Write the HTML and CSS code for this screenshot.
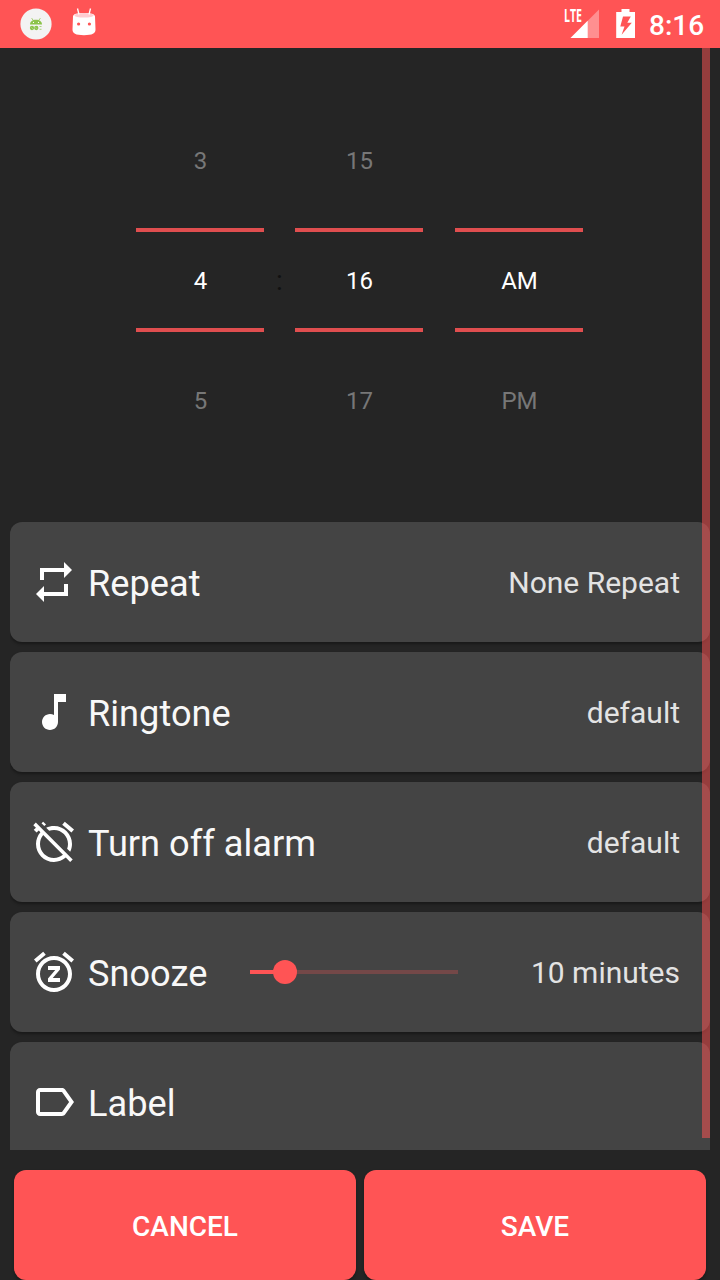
FILE: index.html
```
<!DOCTYPE html>
<html lang="en">
<head>
<meta charset="utf-8">
<title>Alarm</title>
<link rel="stylesheet" href="styles.css">
</head>
<body>
<header class="status">
  <svg class="status-left" width="120" height="48" viewBox="0 0 120 48">
    <circle cx="36" cy="24" r="15.6" fill="#f3f3f3"/>
    <path d="M30 24.600c0-3 2.500-4.900 6-4.900s6 1.900 6 4.900z" fill="#8bc34a"/>
    <path d="M31.700 18.200l1.800 2.500M40.300 18.200l-1.800 2.500" stroke="#8bc34a" stroke-width=".8"/>
    <circle cx="33.500" cy="22.400" r=".6" fill="#fff"/><circle cx="38.500" cy="22.400" r=".6" fill="#fff"/>
    <g fill="none" stroke="#8bc34a" stroke-width="1.300"><circle cx="32" cy="28" r="1.500"/><circle cx="36.300" cy="28" r="1.500"/><path d="M31 29l2-2M35.300 29l2-2"/><path d="M39.500 26.500h2M39.500 29.300h2" stroke-width=".7"/></g>
    <path d="M73 16.500c0-2.500 4-3.500 11-3.500s11 1 11 3.500l.5 13c0 4-3 5.700-11.500 5.700s-11.500-1.700-11.500-5.700z" fill="#fff"/>
    <ellipse cx="84" cy="15.300" rx="9.700" ry="2.300" fill="#ffcdd2"/>
    <path d="M77.500 8.500l1.500 6M90.500 8.500l-1.500 6" stroke="#fff" stroke-width="1.300"/>
    <circle cx="78.600" cy="24" r="1.600" fill="#ff5455"/><circle cx="89.400" cy="24" r="1.600" fill="#ff5455"/>
  </svg>
  <div class="status-right">
    <div class="signal">
      <svg width="37" height="48" viewBox="0 0 37 48"><path d="M36 9.500V38H7.500z" fill="#fff" opacity=".35"/><path d="M24.700 20.800V38H7.500z" fill="#fff"/></svg>
      <svg class="lte" width="30" height="32" viewBox="0 0 30 32"><text x="5" y="22.300" textLength="18" lengthAdjust="spacingAndGlyphs">LTE</text></svg>
    </div>
    <svg class="battery" width="20" height="48" viewBox="0 0 20 48"><path fill="#fff" fill-rule="evenodd" d="M5.500 9h8v3H19v26H.2V12h5.300zM7 16.500L4.300 26.500h4.200L5.600 34.700 15.800 22.800h-4.500l3.500-6.300z"/></svg>
    <span class="clock">8:16</span>
  </div>
</header>

<main class="scroller">
  <section class="picker">
    <div class="wheel"><span class="near">3</span><b class="chosen">4</b><span class="near">5</span></div>
    <span class="colon">:</span>
    <div class="wheel"><span class="near">15</span><b class="chosen">16</b><span class="near">17</span></div>
    <div class="wheel period"><span class="near"></span><b class="chosen">AM</b><span class="near">PM</span></div>
  </section>
  <section class="cards">
    <div class="card">
      <svg class="icon" viewBox="0 0 24 24"><path d="M7 7h10v3l4-4-4-4v3H5v6h2V7zm10 10H7v-3l-4 4 4 4v-3h12v-6h-2v4z"/></svg>
      <span class="name">Repeat</span><span class="value">None Repeat</span>
    </div>
    <div class="card">
      <svg class="icon" viewBox="0 0 24 24"><path d="M12 3v10.550c-.59-.34-1.270-.55-2-.55-2.210 0-4 1.790-4 4s1.790 4 4 4 4-1.790 4-4V7h4V3h-6z"/></svg>
      <span class="name">Ringtone</span><span class="value">default</span>
    </div>
    <div class="card">
      <svg class="icon" viewBox="0 0 24 24"><path d="M12 6c3.870 0 7 3.130 7 7 0 .84-.16 1.650-.43 2.400l1.520 1.520c.58-1.190.91-2.510.91-3.920 0-4.970-4.030-9-9-9-1.410 0-2.730.33-3.920.91L9.600 6.430C10.350 6.160 11.160 6 12 6zm10-.28l-4.600-3.860-1.290 1.530 4.600 3.860L22 5.720zM2.920 2.290L1.650 3.570 2.980 4.900l-1.110.93 1.420 1.420 1.110-.94.8.8C3.830 8.690 3 10.750 3 13c0 4.970 4.020 9 9 9 2.250 0 4.310-.83 5.890-2.200l2.200 2.200 1.270-1.270L3.890 3.270l-.97-.98zm13.550 16.100C15.260 19.390 13.700 20 12 20c-3.870 0-7-3.130-7-7 0-1.700.61-3.260 1.610-4.470l9.860 9.860zM8.020 3.280L6.600 1.860l-.86.71 1.420 1.420.86-.71z"/></svg>
      <span class="name">Turn off alarm</span><span class="value">default</span>
    </div>
    <div class="card">
      <svg class="icon" viewBox="0 0 24 24"><path d="M7.880 3.390L6.600 1.860 2 5.710l1.290 1.530 4.590-3.850zM22 5.720l-4.600-3.860-1.290 1.530 4.600 3.860L22 5.720zM12 4c-4.970 0-9 4.030-9 9s4.020 9 9 9c4.970 0 9-4.030 9-9s-4.030-9-9-9zm0 16c-3.870 0-7-3.130-7-7s3.130-7 7-7 7 3.130 7 7-3.130 7-7 7zm-3-9h3.630L9 15.200V17h6v-2h-3.630L15 10.800V9H9v2z"/></svg>
      <span class="name snooze">Snooze</span>
      <svg class="slider" width="208" height="24" viewBox="0 0 208 24"><path d="M0 10h208v4H0z" fill="#ff5455" opacity=".26"/><path d="M0 10h35v4H0z" fill="#ff5455"/><circle cx="35" cy="12" r="12" fill="#ff5455"/></svg>
      <span class="value">10 minutes</span>
    </div>
    <div class="card">
      <svg class="icon" viewBox="0 0 24 24"><path d="M17.630 5.840C17.270 5.330 16.670 5 16 5L5 5.010C3.900 5.010 3 5.900 3 7v10c0 1.100.9 1.990 2 1.990L16 19c.67 0 1.270-.33 1.630-.84L22 12l-4.370-6.160zM16 17H5V7h11l3.550 5L16 17z"/></svg>
      <span class="name">Label</span>
    </div>
  </section>
  <div class="scrollbar"></div>
</main>

<footer class="actions">
  <button class="action">CANCEL</button>
  <button class="action">SAVE</button>
</footer>
</body>
</html>
```
FILE: styles.css
```
* { box-sizing: border-box; }

body {
  margin: 0;
  width: 720px;
  height: 1280px;
  overflow: hidden;
  display: flex;
  flex-direction: column;
  background: #252525;
  color: #fff;
  font-family: Roboto, sans-serif;
}

svg { display: block; }

.status {
  height: 48px;
  flex: none;
  display: flex;
  justify-content: space-between;
  padding-right: 16px;
  background: #ff5455;
}

.status-right { display: flex; }
.signal { position: relative; margin-right: 16px; }

.lte {
  position: absolute;
  left: -4px;
  top: 0;
  font: 700 17px "Open Sans", sans-serif;
  fill: #fff;
}

.battery { margin-right: 13px; }

.clock {
  width: 55px;
  font-size: 28px;
  font-weight: 500;
  line-height: 51px;
  text-align: right;
}

.scroller {
  position: relative;
  width: 700px;
  height: 1102px;
  margin-left: 10px;
  flex: none;
  overflow: hidden;
}

.picker {
  height: 474px;
  display: flex;
  padding: 52px 0 0 126px;
}

.wheel {
  width: 128px;
  height: 360px;
  display: flex;
  flex-direction: column;
  font-size: 24px;
  text-align: center;
  text-indent: 1px;
}

.period { margin-left: 32px; }

.near {
  height: 128px;
  line-height: 122px;
  color: #777;
}

.chosen {
  height: 104px;
  border: solid #e04e4f;
  border-width: 4px 0;
  font-weight: 400;
  line-height: 98px;
}

.chosen + .near { line-height: 138px; }

.colon {
  width: 31px;
  padding-top: 164px;
  color: #111;
  font-size: 28px;
  line-height: 33px;
  text-align: center;
}

.cards {
  display: flex;
  flex-direction: column;
  gap: 10px;
}

.card {
  height: 120px;
  display: flex;
  align-items: center;
  padding: 0 30px 0 20px;
  border-radius: 12px;
  background: #444;
  box-shadow: 0 2px 3px rgba(0, 0, 0, .35);
}

.icon {
  width: 48px;
  height: 48px;
  margin-right: 10px;
  fill: #fff;
}

.name {
  padding-top: 4px;
  color: #f8f8f8;
  font-size: 36.2px;
  line-height: 44px;
}

.snooze { width: 162px; }

.value {
  margin-left: auto;
  padding-top: 1px;
  color: #e3e3e3;
  font-size: 30px;
  line-height: 36px;
}

.scrollbar {
  position: absolute;
  top: 0;
  right: 0;
  width: 8px;
  height: 1090px;
  background: rgba(255, 84, 85, .52);
}

.actions {
  display: flex;
  gap: 8px;
  padding: 20px 14px 0;
}

.action {
  flex: 1;
  height: 110px;
  padding: 2px 0 0;
  border: 0;
  border-radius: 12px;
  background: #ff5455;
  box-shadow: 0 2px 3px rgba(0, 0, 0, .3);
  color: #fff;
  font: 500 28px Roboto, sans-serif;
}
```
